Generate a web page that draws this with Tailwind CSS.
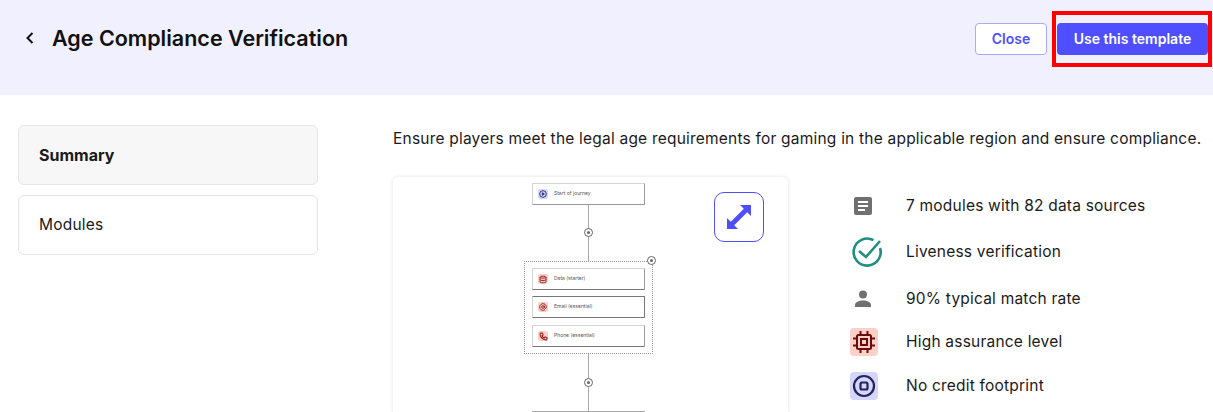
<!DOCTYPE html>
<html lang="en">
<head>
    <meta charset="UTF-8">
    <title>Age Compliance Verification</title>
    <script src="https://cdn.jsdelivr.net/npm/@tailwindcss/browser@4"></script>
</head>
<body class="bg-white font-['Inter',sans-serif] text-[#1a1a1a] h-[412px] w-[1213px] overflow-hidden relative">

<!-- Header -->
<header class="h-[95px] bg-[#f0f0fe] flex items-start justify-between pl-[24px] pr-[5px] pt-[23px]">
    <div class="flex items-center h-[30px]">
        <svg class="w-[12px] h-[14px]" viewBox="0 0 12 14" fill="none" stroke="#111" stroke-width="2"><path d="M8.5 2 L3.5 7 L8.5 12"/></svg>
        <h1 class="ml-[16px] text-[21.5px] font-semibold text-[#111]">Age Compliance Verification</h1>
    </div>
    <div class="flex gap-[10px]">
        <button class="w-[72px] h-[32px] bg-white border border-[#a9a9ff] rounded-[4px] text-[#4f4fff] text-[14px] font-semibold pb-[2px]">Close</button>
        <button class="w-[151px] h-[32px] bg-[#4f4fff] rounded-[4px] text-white text-[14px] font-semibold pb-[2px]">Use this template</button>
    </div>
</header>
<div class="absolute left-[1052px] top-[11px] w-[160px] h-[56px] border-[4px] border-[#ff0000]"></div>

<div class="flex pl-[18px] pt-[30px]">
    <!-- Sidebar -->
    <nav class="w-[300px] flex flex-col gap-[10px] shrink-0">
        <div class="h-[60px] flex items-center pl-[20px] bg-[#f7f7f7] border border-[#e6e6e6] rounded-[6px] text-[16px] font-bold">Summary</div>
        <div class="h-[60px] flex items-center pl-[20px] bg-white border border-[#e6e6e6] rounded-[6px] text-[15.5px] tracking-[0.2px]">Modules</div>
    </nav>

    <main class="ml-[75px] flex-1 min-w-0">
        <p class="text-[15.5px] leading-[28px] whitespace-nowrap tracking-[0.21px]">Ensure players meet the legal age requirements for gaming in the applicable region and ensure compliance.</p>
        <div class="flex mt-[24px]">
            <!-- Journey diagram -->
            <div class="relative w-[395px] h-[235px] shrink-0 bg-white rounded-t-[6px] shadow-[0_0_4px_rgba(0,0,0,0.12)] overflow-hidden text-[5px] text-[#555]">
                <div class="absolute left-[139px] top-[6px] w-[113px] h-[22px] border border-[#d4d4d4] border-b-[#999] border-r-[#999] rounded-[1px] bg-white flex items-center pl-[5px] gap-[6px]">
                    <span class="w-[10px] h-[10px] rounded-[2px] bg-[#d6d6fb] flex items-center justify-center">
                        <svg class="w-[8px] h-[8px]" viewBox="0 0 24 24" fill="none" stroke="#33337a" stroke-width="3"><circle cx="12" cy="12" r="10"/><path d="M10 8l6 4-6 4z" fill="#33337a"/></svg>
                    </span>
                    Start of journey
                </div>
                <div class="absolute left-[195px] top-[28px] w-px h-[56px] bg-[#aaa]"></div>
                <div class="absolute left-[191px] top-[51px] w-[9px] h-[9px] rounded-full bg-white border border-[#666] flex items-center justify-center"><span class="w-[3px] h-[3px] bg-[#666] rounded-full"></span></div>

                <div class="absolute left-[131px] top-[84px] w-[129px] h-[93px] border border-dotted border-[#999]"></div>
                <div class="absolute left-[254px] top-[79px] w-[9px] h-[9px] rounded-full bg-white border border-[#666] flex items-center justify-center"><span class="w-[3px] h-[3px] bg-[#666] rounded-full"></span></div>

                <div class="absolute left-[139px] top-[91px] w-[113px] h-[22px] border border-[#d4d4d4] border-b-[#777] border-r-[#999] rounded-[1px] bg-white flex items-center pl-[5px] gap-[6px]">
                    <span class="w-[10px] h-[10px] rounded-[2px] bg-[#fbd0c8] flex items-center justify-center">
                        <svg class="w-[8px] h-[9px]" viewBox="0 0 24 24" fill="none" stroke="#a02a2a" stroke-width="3"><ellipse cx="12" cy="5" rx="9" ry="3"/><path d="M3 5v14c0 2 4 3 9 3s9-1 9-3V5M3 12c0 2 4 3 9 3s9-1 9-3"/></svg>
                    </span>
                    Data (starter)
                </div>
                <div class="absolute left-[139px] top-[119px] w-[113px] h-[22px] border border-[#777] border-l-[#d4d4d4] rounded-[1px] bg-white flex items-center pl-[5px] gap-[6px]">
                    <span class="w-[10px] h-[10px] rounded-[2px] bg-[#fbd0c8] flex items-center justify-center">
                        <svg class="w-[8px] h-[8px]" viewBox="0 0 24 24" fill="none" stroke="#a02a2a" stroke-width="3"><circle cx="12" cy="12" r="4"/><path d="M16 8v5a3 3 0 0 0 6 0v-1a10 10 0 1 0-4 8"/></svg>
                    </span>
                    Email (essential)
                </div>
                <div class="absolute left-[139px] top-[148px] w-[113px] h-[22px] border border-[#d4d4d4] border-b-[#777] border-r-[#999] rounded-[1px] bg-white flex items-center pl-[5px] gap-[6px]">
                    <span class="w-[10px] h-[10px] rounded-[2px] bg-[#fbd0c8] flex items-center justify-center">
                        <svg class="w-[9px] h-[9px]" viewBox="0 0 24 24" fill="none" stroke="#a02a2a" stroke-width="3"><path d="M5 3h4l2 5-3 2c1 3 3 5 6 6l2-3 5 2v4c0 1-1 2-2 2C10 21 3 14 3 5c0-1 1-2 2-2z"/></svg>
                    </span>
                    Phone (essential)
                </div>

                <div class="absolute left-[195px] top-[177px] w-px h-[57px] bg-[#aaa]"></div>
                <div class="absolute left-[191px] top-[201px] w-[9px] h-[9px] rounded-full bg-white border border-[#666] flex items-center justify-center"><span class="w-[3px] h-[3px] bg-[#666] rounded-full"></span></div>
                <div class="absolute left-[139px] top-[234px] w-[113px] h-[22px] border border-[#aaa] bg-white"></div>

                <!-- Expand button -->
                <button class="absolute left-[321px] top-[15px] w-[50px] h-[50px] rounded-[10px] border border-[#4f4fff] bg-white flex items-center justify-center">
                    <svg class="w-[24px] h-[24px]" viewBox="0 0 24 24" fill="#4f4fff"><path d="M13 0h11v11l-3.800-3.800L7.200 20.200 11 24H0V13l3.800 3.800L16.800 3.800z"/></svg>
                </button>
            </div>

            <!-- Features -->
            <ul class="ml-[62px] text-[15.5px] tracking-[0.21px] flex flex-col">
                <li class="flex items-center h-[28px] mt-[15px]">
                    <span class="w-[28px] flex justify-center -translate-x-[1px]">
                        <svg class="w-[18px] h-[18px]" viewBox="0 0 18 18"><rect width="18" height="18" rx="2" fill="#707070"/><path d="M4 5h10M4 9h10M4 13h7" stroke="#fff" stroke-width="1.8"/></svg>
                    </span>
                    <span class="ml-[28px]">7 modules with 82 data sources</span>
                </li>
                <li class="flex items-center h-[30px] mt-[17px]">
                    <span class="w-[28px] flex justify-center translate-x-[3px]">
                        <svg class="w-[30px] h-[30px] shrink-0" viewBox="0 0 30 30" fill="none" stroke="#1f8f82" stroke-width="2.6"><path d="M21.5 3.2A13.500 13.500 0 1 0 28 11"/><path d="M7 14l7 6L28 4"/></svg>
                    </span>
                    <span class="ml-[28px]">Liveness verification</span>
                </li>
                <li class="flex items-center h-[28px] mt-[18px]">
                    <span class="w-[28px] flex justify-center -translate-x-[1px]">
                        <svg class="w-[18px] h-[18px]" viewBox="0 0 18 18" fill="#707070"><circle cx="9" cy="4.5" r="4"/><path d="M1 17v-2c0-3 4-4.500 8-4.500s8 1.500 8 4.500v2z"/></svg>
                    </span>
                    <span class="ml-[28px]">90% typical match rate</span>
                </li>
                <li class="flex items-center h-[28px] mt-[15px]">
                    <span class="w-[28px] h-[28px] rounded-[4px] bg-[#fbd0c8] flex items-center justify-center">
                        <svg class="w-[26px] h-[26px]" viewBox="0 0 26 26" fill="none" stroke="#6e0a0a" stroke-width="2"><rect x="6" y="6" width="14" height="14" rx="1.500"/><rect x="10" y="10" width="6" height="6"/><path d="M9.500 2v4M16.500 2v4M9.500 20v4M16.500 20v4M2 9.500h4M2 16.500h4M20 9.500h4M20 16.500h4"/></svg>
                    </span>
                    <span class="ml-[28px]">High assurance level</span>
                </li>
                <li class="flex items-center h-[28px] mt-[16px]">
                    <span class="w-[28px] h-[28px] rounded-[4px] bg-[#d6d6fb] flex items-center justify-center">
                        <svg class="w-[24px] h-[24px]" viewBox="0 0 24 24" fill="none" stroke="#23235c" stroke-width="2.200"><circle cx="12" cy="12" r="10"/><rect x="8.500" y="8.500" width="7" height="7" rx="1.500"/></svg>
                    </span>
                    <span class="ml-[28px]">No credit footprint</span>
                </li>
            </ul>
        </div>
    </main>
</div>

</body>
</html>
